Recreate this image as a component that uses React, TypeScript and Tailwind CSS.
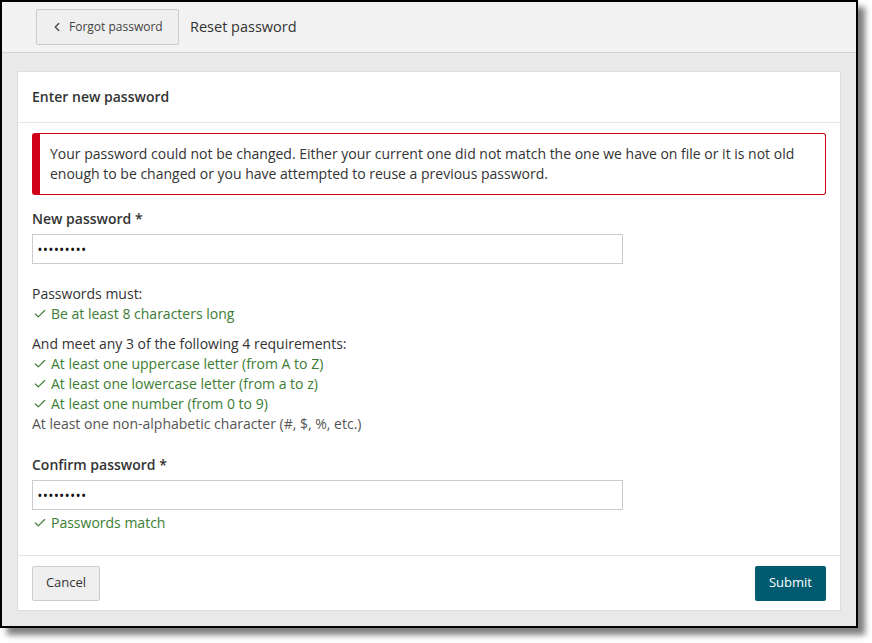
import { Check, ChevronLeft } from 'lucide-react';

const FONT = { fontFamily: '"Open Sans", "Liberation Sans", sans-serif' };

function Req({ ok, children }: { ok?: boolean; children: React.ReactNode }) {
  if (!ok) return <div className="text-[#555] h-[20px]">{children}</div>;
  return (
    <div className="flex items-center h-[20px] text-[#3b7d33]">
      <Check className="w-[14px] h-[14px] ml-px mr-[4px] shrink-0" strokeWidth={2} />
      <span>{children}</span>
    </div>
  );
}

function Dots() {
  return (
    <div className="w-[591px] h-[30px] border border-[#cccccc] bg-white flex items-center pl-[5px]">
      <span className="text-[10px] tracking-[1.7px] text-[#111] leading-none font-bold">•••••••••</span>
    </div>
  );
}

export default function App() {
  return (
    <div className="w-[872px] h-[643px] bg-white" style={FONT}>
      <div className="w-[858px] h-[628px] border-2 border-black bg-[#e9e9e9] shadow-[7px_7px_6px_rgba(0,0,0,0.5)] flex flex-col">
        {/* Top bar */}
        <div className="h-[51px] shrink-0 bg-[#f2f2f2] border-b border-[#d2d2d2] flex items-center pl-[34px] gap-[11px]">
          <button className="h-[36px] w-[143px] bg-[#efefef] border border-[#cccccc] rounded-[2px] flex items-center pl-[13px] text-[12px] text-[#444]">
            <ChevronLeft className="w-[14px] h-[14px] mr-[5px]" strokeWidth={2.2} />
            Forgot password
          </button>
          <span className="text-[14.5px] font-medium text-[#333]">Reset password</span>
        </div>

        {/* Content */}
        <div className="flex-1 px-[15px] pt-[18px] pb-[15px] flex">
          <div className="flex-1 bg-white border border-[#dedede] flex flex-col text-[14px] text-[#333]">
            <div className="h-[51px] shrink-0 border-b border-[#e6e6e6] px-[14px] flex items-center font-semibold pb-[2px]">
              Enter new password
            </div>

            <div className="flex-1 px-[14px] pt-[10px] leading-[20px]">
              <div className="border border-[#d0021b] border-l-[8px] rounded-[3px] py-[10px] pl-[10px] pr-[12px]">
                Your password could not be changed. Either your current one did not match the one we have on file or it is not old enough to be changed or you have attempted to reuse a previous password.
              </div>

              <div className="mt-[14px] mb-[5px] font-semibold">New password *</div>
              <Dots />

              <div className="mt-[20px]">Passwords must:</div>
              <Req ok>Be at least 8 characters long</Req>
              <div className="mt-[10px]">And meet any 3 of the following 4 requirements:</div>
              <Req ok>At least one uppercase letter (from A to Z)</Req>
              <Req ok>At least one lowercase letter (from a to z)</Req>
              <Req ok>At least one number (from 0 to 9)</Req>
              <Req>At least one non-alphabetic character (#, $, %, etc.)</Req>

              <div className="mt-[21px] mb-[5px] font-semibold">Confirm password *</div>
              <Dots />
              <div className="mt-[3px]">
                <Req ok>Passwords match</Req>
              </div>
            </div>

            <div className="h-[55px] shrink-0 border-t border-[#e3e3e3] px-[14px] flex items-center justify-between">
              <button className="h-[35px] w-[68px] bg-[#efefef] border border-[#cccccc] rounded-[2px] text-[13px] text-[#333]">
                Cancel
              </button>
              <button className="h-[35px] w-[71px] bg-[#005a70] rounded-[2px] text-[13px] text-white">
                Submit
              </button>
            </div>
          </div>
        </div>
      </div>
    </div>
  );
}
